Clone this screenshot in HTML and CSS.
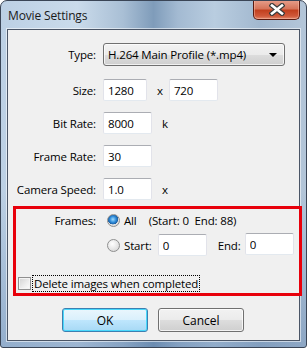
FILE: index.html
```html
<!DOCTYPE html>
<html lang="en">
<head>
    <meta charset="UTF-8">
    <title>Movie Settings</title>
    <link rel="stylesheet" href="styles.css">
</head>
<body>
    <div class="window">
        <div class="titlebar">
            <span class="title">Movie Settings</span>
            <button class="close" type="button" aria-label="Close">
                <svg width="16" height="13" viewBox="0 0 16 13">
                    <path d="M3 2.5 L13 10.5 M13 2.5 L3 10.5" stroke="#3b3b3b" stroke-width="5" stroke-linecap="square"/>
                    <path d="M3 2.5 L13 10.5 M13 2.5 L3 10.5" stroke="#ffffff" stroke-width="2.6" stroke-linecap="square"/>
                </svg>
            </button>
        </div>

        <div class="client">
            <div class="row row-type">
                <span class="label">Type:</span>
                <div class="select">
                    <span>H.264 Main Profile (*.mp4)</span>
                    <span class="arrow"></span>
                </div>
            </div>

            <div class="row">
                <span class="label">Size:</span>
                <input class="field narrow" type="text" value="1280">
                <span class="unit">x</span>
                <input class="field" type="text" value="720">
            </div>

            <div class="row">
                <span class="label">Bit Rate:</span>
                <input class="field" type="text" value="8000">
                <span class="unit">k</span>
            </div>

            <div class="row">
                <span class="label">Frame Rate:</span>
                <input class="field" type="text" value="30">
            </div>

            <div class="row">
                <span class="label">Camera Speed:</span>
                <input class="field" type="text" value="1.0">
                <span class="unit">x</span>
            </div>

            <div class="frames-box">
                <div class="frames-row">
                    <span class="label">Frames:</span>
                    <span class="radio checked"></span>
                    <span class="opt">All</span>
                    <span class="range">(Start: 0&nbsp; End: 88)</span>
                </div>
                <div class="frames-row second">
                    <span class="label"></span>
                    <span class="radio"></span>
                    <span class="opt">Start:</span>
                    <input class="field" type="text" value="0">
                    <span class="end-label">End:</span>
                    <input class="field end" type="text" value="0">
                </div>
                <div class="check-row">
                    <span class="checkbox"></span>
                    <span class="check-text">Delete images when completed</span>
                </div>
            </div>

            <div class="buttons">
                <button class="btn default" type="button">OK</button>
                <button class="btn" type="button">Cancel</button>
            </div>
        </div>
    </div>
</body>
</html>
```

FILE: styles.css
```css
/* Movie Settings dialog, Windows 7 look */
body {
    margin: 0;
    background: #ffffff;
    font-family: "Open Sans", "Noto Sans", Arial, sans-serif;
    font-size: 11.5px;
    letter-spacing: -0.15px;
    color: #000000;
}

.window {
    width: 307px;
    height: 348px;
    box-sizing: border-box;
    border: 1px solid #3a4556;
    border-radius: 7px 7px 3px 3px;
    display: flex;
    flex-direction: column;
    overflow: hidden;
    background:
        linear-gradient(to bottom, rgba(255, 255, 255, 0) 55%, rgba(70, 110, 160, 0.35) 100%),
        linear-gradient(to right, #bcd0e4 0%, #cadbeb 25%, #a9bfd5 40%, #7f9cba 50%, #a3bad2 58%, #b9cde0 70%, #a2b8cf 85%, #b4c6d9 100%);
}

.titlebar {
    height: 28px;
    display: flex;
    align-items: flex-start;
    justify-content: space-between;
    padding-left: 7px;
}

.title {
    margin-top: 6px;
    font-size: 12px;
    color: #1a1a1a;
}

.close {
    width: 47px;
    height: 20px;
    margin: -1px 6px 0 0;
    padding: 0;
    border: 1px solid #5a1a10;
    border-top: none;
    border-radius: 0 0 5px 5px;
    background: linear-gradient(to bottom, #e7a08d 0%, #d6755b 45%, #c2401f 55%, #d0593a 85%, #e08a6f 100%);
    box-shadow: inset 0 0 0 1px rgba(255, 200, 180, 0.45);
    display: flex;
    align-items: center;
    justify-content: center;
}

.client {
    flex: 1;
    margin: 0 6px 6px 6px;
    border: 1px solid #4a5566;
    box-shadow: 0 0 0 1px rgba(255, 255, 255, 0.55);
    background: #f0f0f0;
    padding-top: 13px;
    display: flex;
    flex-direction: column;
}

.row {
    display: flex;
    align-items: center;
    height: 22px;
    margin-bottom: 11px;
}

.row-type {
    height: 23px;
    margin-bottom: 13px;
}

.label {
    width: 88px;
    margin-right: 7px;
    text-align: right;
    flex: none;
}

.select {
    width: 182px;
    height: 23px;
    box-sizing: border-box;
    border: 1px solid #707070;
    border-radius: 3px;
    background: linear-gradient(to bottom, #f2f2f2 0%, #ebebeb 50%, #dddddd 51%, #cfcfcf 100%);
    box-shadow: inset 0 0 0 1px rgba(255, 255, 255, 0.7);
    display: flex;
    align-items: center;
    justify-content: space-between;
    padding: 0 7px 0 4px;
}

.arrow {
    width: 0;
    height: 0;
    border-left: 4px solid transparent;
    border-right: 4px solid transparent;
    border-top: 4px solid #000000;
}

.field {
    width: 49px;
    height: 22px;
    box-sizing: border-box;
    margin: 0;
    padding: 0 0 0 4px;
    border: 1px solid #e2e3ea;
    border-top-color: #abadb3;
    border-bottom-color: #e3e9ef;
    border-radius: 2px;
    background: #ffffff;
    font-family: inherit;
    font-size: 11.5px;
    letter-spacing: -0.15px;
    color: #000000;
}

.field.narrow {
    width: 44px;
}

.unit {
    margin: 0 6px 0 10px;
}

.frames-box {
    margin: -5px -3px 0 5px;
    height: 90px;
    box-sizing: border-box;
    border: 3px solid #e8000b;
}

.frames-row {
    display: flex;
    align-items: center;
    height: 22px;
}

.frames-box .label {
    width: 80px;
}

.frames-row.second {
    margin-top: 3px;
}

.radio {
    width: 13px;
    height: 13px;
    box-sizing: border-box;
    margin-left: 4px;
    border-radius: 50%;
    border: 1px solid #8e8f8f;
    background: radial-gradient(circle at 40% 35%, #ffffff 0%, #e8e8e8 50%, #cfcfcf 100%);
    flex: none;
}

.radio.checked {
    background:
        radial-gradient(circle at 45% 40%, #9fdcff 0%, #2d8ad8 35%, #1e5fa0 55%, rgba(0, 0, 0, 0) 58%),
        radial-gradient(circle at 40% 35%, #ffffff 0%, #e8e8e8 50%, #cfcfcf 100%);
}

.opt {
    margin-left: 4px;
}

.range {
    margin-left: 12px;
}

.frames-row.second .field {
    margin-left: 6px;
}

.end-label {
    margin-left: 11px;
    margin-right: 4px;
}

.frames-row.second .field.end {
    margin-left: 0;
    margin-top: -2px;
}

.check-row {
    display: flex;
    align-items: center;
    height: 16px;
    margin-top: 19px;
    margin-left: 2px;
}

.checkbox {
    width: 13px;
    height: 13px;
    box-sizing: border-box;
    border: 1px solid #8f8f8f;
    background: linear-gradient(135deg, #d2d2d2 0%, #eeeeee 60%, #fdfdfd 100%);
    box-shadow: inset 0 0 0 1px #f4f4f4;
    flex: none;
}

.check-text {
    margin-left: 2px;
    padding: 0 1px;
    outline: 1px dotted #000000;
    line-height: 15px;
}

.buttons {
    display: flex;
    gap: 10px;
    margin-top: 12px;
    padding-left: 54px;
}

.btn {
    width: 86px;
    height: 24px;
    margin: 0;
    border: 1px solid #707070;
    border-radius: 3px;
    background: linear-gradient(to bottom, #f2f2f2 0%, #ebebeb 50%, #dddddd 51%, #cfcfcf 100%);
    box-shadow: inset 0 0 0 1px rgba(255, 255, 255, 0.75);
    font-family: inherit;
    font-size: 12px;
    color: #000000;
}

.btn.default {
    border-color: #3c7fb1;
    background: linear-gradient(to bottom, #eaf6fd 0%, #d9f0fc 50%, #bee6fd 51%, #a7d9f5 100%);
    box-shadow: inset 0 0 0 1px #48d8fb;
}
```
